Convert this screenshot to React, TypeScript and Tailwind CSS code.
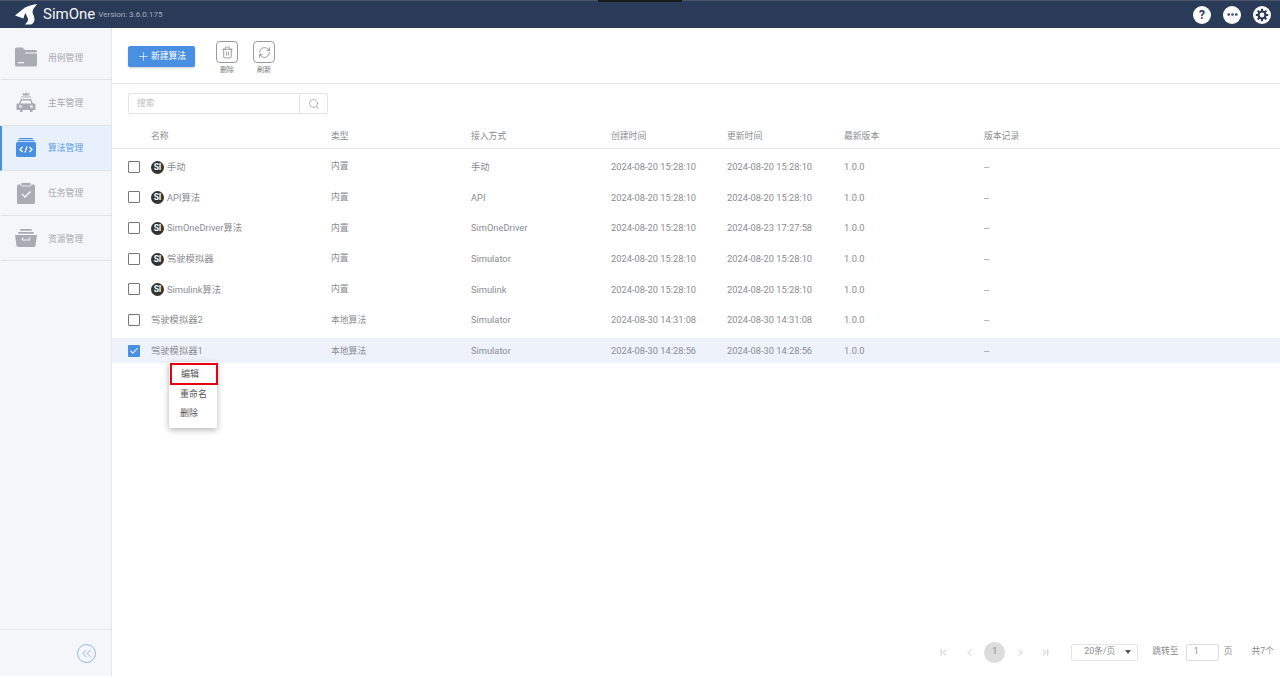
import React from 'react';
import { ChevronLeft, ChevronRight, ChevronsLeft, ChevronFirst, ChevronLast, Search, Check, Plus, Trash2, RefreshCw, Ellipsis } from 'lucide-react';

const rows = [
  { name: '手动', builtin: true, type: '内置', access: '手动', created: '2024-08-20 15:28:10', updated: '2024-08-20 15:28:10' },
  { name: 'API算法', builtin: true, type: '内置', access: 'API', created: '2024-08-20 15:28:10', updated: '2024-08-20 15:28:10' },
  { name: 'SimOneDriver算法', builtin: true, type: '内置', access: 'SimOneDriver', created: '2024-08-20 15:28:10', updated: '2024-08-23 17:27:58' },
  { name: '驾驶模拟器', builtin: true, type: '内置', access: 'Simulator', created: '2024-08-20 15:28:10', updated: '2024-08-20 15:28:10' },
  { name: 'Simulink算法', builtin: true, type: '内置', access: 'Simulink', created: '2024-08-20 15:28:10', updated: '2024-08-20 15:28:10' },
  { name: '驾驶模拟器2', builtin: false, type: '本地算法', access: 'Simulator', created: '2024-08-30 14:31:08', updated: '2024-08-30 14:31:08' },
  { name: '驾驶模拟器1', builtin: false, type: '本地算法', access: 'Simulator', created: '2024-08-30 14:28:56', updated: '2024-08-30 14:28:56', selected: true },
];

const FolderIcon = () => (
  <svg width="24" height="20" viewBox="0 0 24 20">
    <path d="M1 2a1.500 1.500 0 0 1 1.500-1.500h6L11 3h10.500A1.500 1.500 0 0 1 23 4.500V18a1.500 1.500 0 0 1-1.500 1.500h-19A1.500 1.500 0 0 1 1 18z" fill="#a9acb3" />
    <path d="M11 5.500h12v1H11z" fill="#f5f6fa" />
    <rect x="4" y="15" width="6" height="1.300" fill="#f5f6fa" />
  </svg>
);

const CarIcon = () => (
  <svg width="20" height="22" viewBox="0 0 20 22">
    <path d="M7 4.500 6.500 1.500 8.500 3 10 1l1.500 2 2-1.500L13 4.500z" fill="#a9acb3" />
    <rect x="5" y="5.500" width="10" height="1" fill="#a9acb3" />
    <path d="M5 8h10l2 4.500h1.500a1 1 0 0 1 1 1V19h-3v2h-2.500v-2H6.500v2H4v-2H.5v-5.500a1 1 0 0 1 1-1H3z" fill="#a9acb3" />
    <path d="M5.800 9.500h8.400l1.200 3H4.600z" fill="#f5f6fa" />
    <circle cx="4.500" cy="15.500" r="1.300" fill="#f5f6fa" />
    <circle cx="15.500" cy="15.500" r="1.300" fill="#f5f6fa" />
  </svg>
);

const CodeIcon = () => (
  <svg width="20" height="19" viewBox="0 0 20 19">
    <rect x="3" y="0" width="14" height="1.200" rx="0.600" fill="#4a90e2" />
    <rect x="1.500" y="2" width="17" height="1.200" rx="0.600" fill="#4a90e2" />
    <rect x="0" y="4" width="20" height="15" rx="1.500" fill="#4a90e2" />
    <path d="M6.500 9 4 11.500 6.500 14M13.500 9l2.500 2.500-2.500 2.500M11 8.500l-2 6" stroke="#fff" strokeWidth="1.200" fill="none" />
  </svg>
);

const ClipboardIcon = () => (
  <svg width="18" height="22" viewBox="0 0 18 22">
    <rect x="0" y="2.500" width="18" height="19.500" rx="1.500" fill="#a9acb3" />
    <rect x="4" y="0.500" width="10" height="3.500" rx="1" fill="#a9acb3" stroke="#f5f6fa" strokeWidth="0.800" />
    <path d="m5 12 3 3 5.500-5.500" stroke="#f5f6fa" strokeWidth="1.500" fill="none" />
  </svg>
);

const BoxIcon = () => (
  <svg width="22" height="18" viewBox="0 0 22 18">
    <rect x="5" y="0" width="12" height="1.800" rx="0.900" fill="#a9acb3" />
    <rect x="3" y="3" width="16" height="1.800" rx="0.900" fill="#a9acb3" />
    <path d="M0 6h22l-1.500 10.500A1.700 1.700 0 0 1 18.800 18H3.200a1.700 1.700 0 0 1-1.700-1.500z" fill="#a9acb3" />
    <path d="M7.500 8.500v2.500h7V8.500" stroke="#f5f6fa" strokeWidth="1.200" fill="none" />
  </svg>
);

const Logo = () => (
  <svg width="24" height="21" viewBox="0 0 24 21">
    <path d="M1 11.500 11 3.500C15 1.500 19.500.5 23 0c-1.500 2.500-4.500 5-4.500 8 0 2 2 4 2 7.500 0 2-1.500 4.500-3.500 5h-6c1.500-1.500 3-3 3-5 0-2.500-2-3.500-2-6.500-1.500 1-2 3-2.500 5.500z" fill="#fff" />
  </svg>
);

const GearIcon = () => (
  <svg width="14" height="14" viewBox="0 0 14 14">
    <circle cx="7" cy="7" r="3.500" fill="none" stroke="#2a3a59" strokeWidth="2.200" />
    <path d="M7 .800v2.400M7 10.800v2.400M.800 7h2.400M10.800 7h2.400M2.600 2.600l1.700 1.700M9.700 9.700l1.700 1.700M11.400 2.600 9.700 4.300M4.300 9.700l-1.700 1.700" stroke="#2a3a59" strokeWidth="2" />
  </svg>
);

const navItems = [
  { label: '用例管理', icon: <FolderIcon /> },
  { label: '主车管理', icon: <CarIcon /> },
  { label: '算法管理', icon: <CodeIcon />, active: true },
  { label: '任务管理', icon: <ClipboardIcon /> },
  { label: '资源管理', icon: <BoxIcon /> },
];

export default function App() {
  return (
    <div className="relative flex h-[676px] w-[1280px] flex-col overflow-hidden bg-white font-['Roboto','Noto_Sans_CJK_SC',sans-serif] text-[8.800px] text-[#8a8c90]">
      {/* Top bar */}
      <header className="flex h-[28px] shrink-0 items-center border-t border-[#4a5568] bg-[#2a3a59] pl-[14px] pr-[9px]">
        <Logo />
        <span className="ml-[5px] text-[15px] text-[#f2f4f7]">SimOne</span>
        <span className="ml-[3px] text-[8px] text-[#a3adbd]">Version: 3.6.0.175</span>
        <div className="ml-auto flex items-center gap-[12px]">
          <span className="flex h-[18px] w-[18px] items-center justify-center rounded-full bg-white text-[12px] font-bold text-[#2a3a59]">?</span>
          <span className="flex h-[18px] w-[18px] items-center justify-center rounded-full bg-white text-[#2a3a59]">
            <Ellipsis size={13} strokeWidth={3} />
          </span>
          <span className="flex h-[18px] w-[18px] items-center justify-center rounded-full bg-white">
            <GearIcon />
          </span>
        </div>
      </header>
      <div className="absolute left-[598px] top-0 h-[2px] w-[84px] bg-[#1a1a1a]" />

      <div className="flex min-h-0 flex-1">
        {/* Sidebar */}
        <aside className="flex w-[112px] shrink-0 flex-col border-r border-[#e4e6ea] bg-[#f5f6fa] pt-[7px]">
          {navItems.map((item) => (
            <div
              key={item.label}
              className={
                item.active
                  ? 'flex h-[45.300px] items-center border-b border-l-2 border-[#e0e2e6] border-l-[#4a90e2] bg-[#e8f1fb] text-[#5b9be6]'
                  : 'flex h-[45.300px] items-center border-b border-l-2 border-[#e0e2e6] border-l-transparent text-[#a6a8ad]'
              }
            >
              <span className="flex w-[46px] shrink-0 items-center justify-center pl-[2px]">{item.icon}</span>
              <span className="pt-[2px]">{item.label}</span>
            </div>
          ))}
          <div className="mt-auto flex h-[47px] items-center justify-end border-t border-[#e4e6ea] pr-[15px]">
            <span className="flex h-[19px] w-[19px] items-center justify-center rounded-full border border-[#8fb8ea] text-[#6fa3e4]">
              <ChevronsLeft size={15} strokeWidth={1.300} />
            </span>
          </div>
        </aside>

        {/* Content */}
        <main className="relative flex min-w-0 flex-1 flex-col">
          <div className="flex h-[56px] shrink-0 items-start border-b border-[#e8e8e8] pl-[16px] pt-[13px]">
            <button className="mt-[5px] flex h-[21px] w-[67px] items-center justify-center gap-[1px] rounded-[2px] bg-[#4a90e2] text-[8.800px] text-white shadow-[0_1px_2px_rgba(0,0,0,0.2)]">
              <Plus size={13} strokeWidth={1.200} />
              新建算法
            </button>
            <div className="ml-[21px] flex w-[22px] flex-col items-center">
              <span className="flex h-[22px] w-[22px] items-center justify-center rounded-[4px] border border-[#9a9a9a] text-[#777]">
                <Trash2 size={13} strokeWidth={1.300} />
              </span>
              <span className="mt-[2px] text-[7px] text-[#777]">删除</span>
            </div>
            <div className="ml-[15px] flex w-[22px] flex-col items-center">
              <span className="flex h-[22px] w-[22px] items-center justify-center rounded-[4px] border border-[#9a9a9a] text-[#777]">
                <RefreshCw size={13} strokeWidth={1.300} />
              </span>
              <span className="mt-[2px] text-[7px] text-[#777]">刷新</span>
            </div>
          </div>

          <div className="ml-[16px] mt-[9px] flex h-[21px] w-[200px] shrink-0 items-center rounded-[2px] border border-[#e4e4e4]">
            <span className="flex-1 pl-[8px] text-[#bdbdbd]">搜索</span>
            <span className="flex h-full w-[28px] items-center justify-center border-l border-[#e4e4e4] text-[#888]">
              <Search size={12} strokeWidth={1.200} />
            </span>
          </div>

          {/* Table */}
          <div className="mt-[10px] grid h-[25px] shrink-0 grid-cols-[23px_180px_140px_140px_116px_117px_140px_1fr] items-center border-b border-[#e8e8e8] pl-[16px] pt-[1px]">
            <span />
            <span>名称</span>
            <span>类型</span>
            <span>接入方式</span>
            <span>创建时间</span>
            <span>更新时间</span>
            <span>最新版本</span>
            <span>版本记录</span>
          </div>
          <div className="flex flex-col gap-[5.700px] pt-[5px]">
            {rows.map((row) => (
              <div
                key={row.name}
                className={
                  row.selected
                    ? 'grid h-[25px] grid-cols-[23px_180px_140px_140px_116px_117px_140px_1fr] items-center bg-[#eef3fb] pl-[16px] pt-[1px] text-[9.300px]'
                    : 'grid h-[25px] grid-cols-[23px_180px_140px_140px_116px_117px_140px_1fr] items-center pl-[16px] pt-[1px] text-[9.300px]'
                }
              >
                {row.selected ? (
                  <span className="-mt-[1px] flex h-[12px] w-[12px] items-center justify-center rounded-[1px] bg-[#4a90e2] text-white">
                    <Check size={10} strokeWidth={2.500} />
                  </span>
                ) : (
                  <span className="-mt-[1px] h-[12px] w-[12px] rounded-[1px] border border-[#777]" />
                )}
                <span className="flex items-center gap-[3px]">
                  {row.builtin && (
                    <span className="flex h-[13px] w-[13px] items-center justify-center rounded-full bg-[#333] text-[8.500px] font-bold text-white">SI</span>
                  )}
                  {row.name}
                </span>
                <span className="text-[8.800px]">{row.type}</span>
                <span>{row.access}</span>
                <span>{row.created}</span>
                <span>{row.updated}</span>
                <span>1.0.0</span>
                <span>--</span>
              </div>
            ))}
          </div>

          {/* Row context menu */}
          <div className="absolute left-[57px] top-[334px] flex h-[66px] w-[48px] flex-col rounded-[2px] bg-white pt-[1px] text-[9px] text-[#555] shadow-[0_2px_6px_rgba(0,0,0,0.3)]">
            <span className="ml-[1px] flex h-[22px] w-[48px] items-center border-2 border-[#e60012] pl-[9px] pt-[2px]">编辑</span>
            <span className="flex h-[19px] items-center pl-[11px]">重命名</span>
            <span className="flex h-[19px] items-center pl-[11px]">删除</span>
          </div>

          {/* Pagination */}
          <div className="mt-auto flex h-[47px] items-center justify-end pr-[6px] pb-[1px]">
            <ChevronFirst size={11} strokeWidth={1.400} className="text-[#a5a5a5]" />
            <ChevronLeft size={11} strokeWidth={1.400} className="ml-[15px] text-[#a5a5a5]" />
            <span className="ml-[9px] flex h-[21px] w-[21px] items-center justify-center rounded-full bg-[#dcdcdc] text-[#888]">1</span>
            <ChevronRight size={11} strokeWidth={1.400} className="ml-[10px] text-[#a5a5a5]" />
            <ChevronLast size={11} strokeWidth={1.400} className="ml-[14px] text-[#a5a5a5]" />
            <span className="ml-[20px] flex h-[17px] w-[67px] items-center justify-between rounded-[2px] border border-[#e4e4e4] pl-[12px] pr-[6px]">
              20条/页
              <span className="h-0 w-0 border-x-[3.500px] border-t-[4px] border-x-transparent border-t-[#555]" />
            </span>
            <span className="ml-[14px]">跳转至</span>
            <span className="ml-[7px] flex h-[17px] w-[33px] items-center rounded-[2px] border border-[#ddd] pl-[7px]">1</span>
            <span className="ml-[5px]">页</span>
            <span className="ml-[19px]">共7个</span>
          </div>
        </main>
      </div>
    </div>
  );
}
